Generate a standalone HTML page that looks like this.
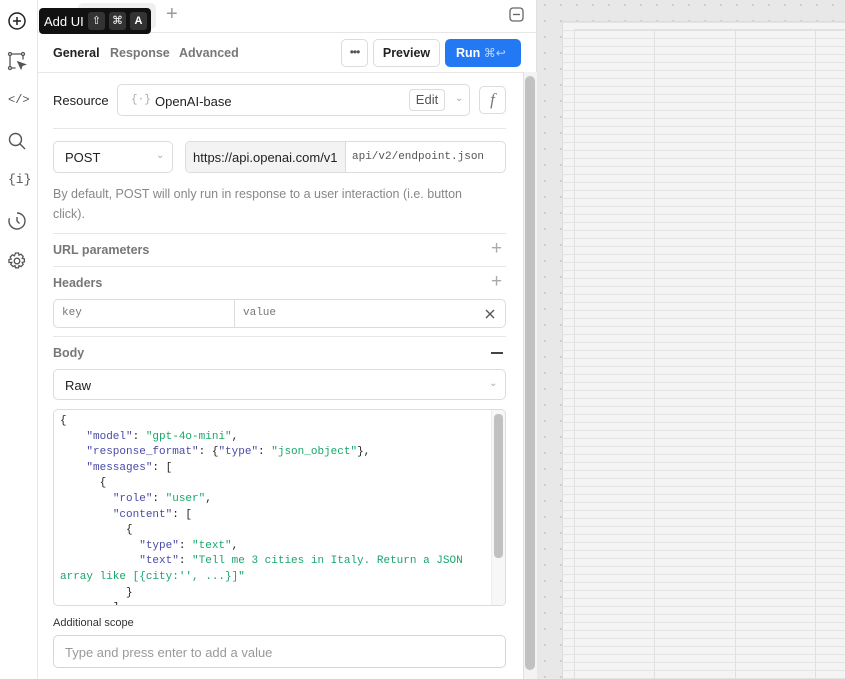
<!DOCTYPE html>
<html><head><style>
*{box-sizing:border-box;margin:0;padding:0}
html,body{width:845px;height:679px;overflow:hidden}
body{font-family:"Liberation Sans",sans-serif;background:#fff;position:relative;color:#222}
.abs{position:absolute}
.side{left:0;top:0;width:38px;height:679px;background:#fff;border-right:1px solid #e6e6e6}
.panel{left:38px;top:0;width:499px;height:679px;background:#fff;border-right:1px solid #e0e0e0}
.canvas{left:537px;top:0;width:308px;height:679px;background-color:#e8e8e8;background-image:radial-gradient(#c9c9c9 1px,transparent 1.1px);background-size:16px 16px;background-position:0px -3px}
.frame{left:562px;top:21px;width:283px;height:658px;background:#f4f4f4;border-left:1px solid #ddd;border-top:1px solid #ddd;
background-image:linear-gradient(#e4e4e4 1px,transparent 1px);background-size:100% 8px;background-position:0 8px}
.vl{width:1px;background:#e0e0e0;top:30px;height:649px}
.box{border:1px solid #dcdcdc;border-radius:5px;background:#fff}
.t13{font-size:13px}
.b{font-size:12.5px;font-weight:bold}
.hr{height:1px;background:#e6e6e6;left:53px;width:453px}
.mono{font-family:"Liberation Mono",monospace}
.code{font-size:11px;line-height:15.6px;white-space:pre;color:#222}
.k{color:#4a4aa8}.s{color:#19a66b}
</style></head><body>
<div class="abs canvas"></div>
<div class="abs frame"></div>
<div class="abs vl" style="left:574px"></div>
<div class="abs vl" style="left:654px"></div>
<div class="abs vl" style="left:735px"></div>
<div class="abs vl" style="left:815px"></div>
<div class="abs" style="left:574px;top:29px;width:271px;height:1px;background:#e0e0e0"></div>

<div class="abs side">
<svg class="abs" style="left:7px;top:11px" width="20" height="20" viewBox="0 0 20 20" fill="none" stroke="#222" stroke-width="1.5"><circle cx="10" cy="10" r="8"/><path d="M10 6v8M6 10h8"/></svg>
<svg class="abs" style="left:7px;top:51px" width="20" height="20" viewBox="0 0 20 20" fill="none" stroke="#555" stroke-width="1.3"><circle cx="3" cy="3" r="1.5"/><circle cx="16" cy="3" r="1.5"/><circle cx="3" cy="17" r="1.5"/><path d="M4.5 3h10M3 4.5v11M16 4.5v4M4.5 17h4"/><path d="M11 11l7 2.5-3 1-1 3z" fill="#555"/></svg>
<div class="abs mono" style="left:8px;top:93px;font-size:12px;color:#555">&lt;/&gt;</div>
<svg class="abs" style="left:7px;top:131px" width="20" height="20" viewBox="0 0 20 20" fill="none" stroke="#555" stroke-width="1.4"><circle cx="8.5" cy="8.5" r="6"/><path d="M13 13l5 5"/></svg>
<div class="abs mono" style="left:8px;top:172px;font-size:13px;color:#555">{i}</div>
<svg class="abs" style="left:7px;top:211px" width="20" height="20" viewBox="0 0 20 20" fill="none" stroke="#555" stroke-width="1.4"><path d="M10 2a8 8 0 1 1-7.5 5.2"/><path d="M10 6v4l2.5 2.5"/></svg>
<svg class="abs" style="left:7px;top:251px" width="20" height="20" viewBox="0 0 20 20" fill="none" stroke="#555" stroke-width="1.3"><circle cx="10" cy="10" r="2.8"/><path d="M8.5 2h3l.5 2.2 2-1 2.2 2.2-1 2 2.2.5v3l-2.2.5 1 2-2.2 2.2-2-1-.5 2.2h-3l-.5-2.2-2 1-2.2-2.2 1-2L2 11.5v-3l2.2-.5-1-2 2.2-2.2 2 1z"/></svg>
</div>

<div class="abs panel">
<div class="abs" style="left:40px;top:3px;width:78px;height:26px;background:#f0f0f0;border-radius:5px"></div>
<div class="abs" style="left:128px;top:3px;font-size:20px;color:#999">+</div>
<svg class="abs" style="left:471px;top:7px" width="15" height="15" viewBox="0 0 15 15" fill="none" stroke="#666" stroke-width="1.3"><rect x="1" y="1" width="13" height="13" rx="3"/><path d="M4 7.5h7"/></svg>
<div class="abs" style="left:0;top:32px;width:499px;height:1px;background:#e6e6e6"></div>
<div class="abs b" style="left:15px;top:46px;color:#222">General</div>
<div class="abs b" style="left:72px;top:46px;color:#777">Response</div>
<div class="abs b" style="left:141px;top:46px;color:#777">Advanced</div>
<div class="abs box" style="left:303px;top:39px;width:27px;height:28px;text-align:center;font-size:12px;line-height:24px;color:#555;letter-spacing:-1px">•••</div>
<div class="abs box b" style="left:335px;top:39px;width:67px;height:28px;text-align:center;line-height:26px">Preview</div>
<div class="abs b" style="left:407px;top:39px;width:76px;height:28px;border-radius:5px;background:#2379f4;color:#fff;line-height:28px;padding-left:11px">Run <span style="font-weight:normal;color:#b9d4fb;font-size:12px">⌘↩</span></div>
<div class="abs" style="left:0;top:72px;width:486px;height:1px;background:#e6e6e6"></div>
<div class="abs" style="left:485px;top:72px;width:14px;height:607px;background:#f3f3f3;border-left:1px solid #e2e2e2"></div>
<div class="abs" style="left:487px;top:76px;width:10px;height:594px;background:#c1c1c1;border-radius:5px"></div>
</div>

<div class="abs t13" style="left:53px;top:93px">Resource</div>
<div class="abs box" style="left:117px;top:84px;width:353px;height:32px"></div>
<div class="abs mono" style="left:131px;top:94px;font-size:11px;color:#aaa">{·}</div>
<div class="abs t13" style="left:155px;top:94px">OpenAI-base</div>
<div class="abs box" style="left:409px;top:89px;width:36px;height:22px;border-radius:4px;text-align:center;line-height:20px;font-size:13px;color:#555">Edit</div>
<div class="abs" style="left:455px;top:93px;font-size:10px;color:#aaa">⌄</div>
<div class="abs box" style="left:479px;top:86px;width:27px;height:28px;text-align:center;font-family:'Liberation Serif',serif;font-style:italic;font-size:17px;line-height:26px;color:#777">f</div>
<div class="abs hr" style="top:128px"></div>

<div class="abs box" style="left:53px;top:141px;width:120px;height:32px"></div>
<div class="abs t13" style="left:65px;top:150px">POST</div>
<div class="abs" style="left:156px;top:150px;font-size:10px;color:#aaa">⌄</div>
<div class="abs box" style="left:185px;top:141px;width:321px;height:32px;overflow:hidden">
<div class="abs" style="left:0;top:0;width:160px;height:30px;background:#f3f3f3;border-right:1px solid #dcdcdc"></div>
<div class="abs t13" style="left:7px;top:8px">https://api.openai.com/v1</div>
<div class="abs mono" style="left:166px;top:9px;font-size:11px;color:#555">api/v2/endpoint.json</div>
</div>
<div class="abs" style="left:53px;top:184px;width:430px;line-height:20px;font-size:12.5px;color:#888">By default, POST will only run in response to a user interaction (i.e. button click).</div>
<div class="abs hr" style="top:233px"></div>
<div class="abs b" style="left:53px;top:243px;color:#777">URL parameters</div>
<div class="abs" style="left:491px;top:238px;font-size:19px;color:#aaa">+</div>
<div class="abs hr" style="top:266px"></div>
<div class="abs b" style="left:53px;top:276px;color:#777">Headers</div>
<div class="abs" style="left:491px;top:271px;font-size:19px;color:#aaa">+</div>
<div class="abs box" style="left:53px;top:299px;width:453px;height:29px"></div>
<div class="abs" style="left:234px;top:300px;width:1px;height:27px;background:#dcdcdc"></div>
<div class="abs mono" style="left:62px;top:307px;font-size:11px;color:#777">key</div>
<div class="abs mono" style="left:243px;top:307px;font-size:11px;color:#777">value</div>
<svg class="abs" style="left:485px;top:309px" width="10" height="10" viewBox="0 0 10 10" stroke="#555" stroke-width="1.4"><path d="M1 1l8 8M9 1l-8 8"/></svg>
<div class="abs hr" style="top:336px"></div>
<div class="abs b" style="left:53px;top:346px;color:#777">Body</div>
<div class="abs" style="left:491px;top:352px;width:12px;height:1.5px;background:#444"></div>
<div class="abs box" style="left:53px;top:369px;width:453px;height:31px"></div>
<div class="abs t13" style="left:65px;top:378px">Raw</div>
<div class="abs" style="left:489px;top:378px;font-size:10px;color:#aaa">⌄</div>

<div class="abs box" style="left:53px;top:409px;width:453px;height:197px;overflow:hidden">
<div class="abs" style="left:437px;top:0;width:15px;height:197px;background:#f7f7f7;border-left:1px solid #eee"></div>
<div class="abs" style="left:440px;top:4px;width:9px;height:144px;background:#c1c1c1;border-radius:4px"></div>
<div class="abs mono code" style="left:6px;top:4px">{
    <span class="k">"model"</span>: <span class="s">"gpt-4o-mini"</span>,
    <span class="k">"response_format"</span>: {<span class="k">"type"</span>: <span class="s">"json_object"</span>},
    <span class="k">"messages"</span>: [
      {
        <span class="k">"role"</span>: <span class="s">"user"</span>,
        <span class="k">"content"</span>: [
          {
            <span class="k">"type"</span>: <span class="s">"text"</span>,
            <span class="k">"text"</span>: <span class="s">"Tell me 3 cities in Italy. Return a JSON</span>
<span class="s">array like [{city:'', ...}]"</span>
          }
        ]</div>
</div>
<div class="abs" style="left:53px;top:617px;font-size:11px;color:#333">Additional scope</div>
<div class="abs box" style="left:53px;top:635px;width:453px;height:33px;border-color:#cfd8e0"></div>
<div class="abs t13" style="left:65px;top:645px;color:#999">Type and press enter to add a value</div>

<div class="abs" style="left:39px;top:8px;width:112px;height:26px;background:#111;border-radius:4px"></div>
<div class="abs t13" style="left:44px;top:14px;color:#fff">Add UI</div>
<div class="abs" style="left:88px;top:12px;width:17px;height:18px;background:#333;border-radius:3px;color:#fff;font-size:11px;text-align:center;line-height:18px">⇧</div>
<div class="abs" style="left:109px;top:12px;width:17px;height:18px;background:#333;border-radius:3px;color:#fff;font-size:11px;text-align:center;line-height:18px">⌘</div>
<div class="abs" style="left:130px;top:12px;width:17px;height:18px;background:#333;border-radius:3px;color:#fff;font-size:11px;font-weight:bold;text-align:center;line-height:18px">A</div>
</body></html>
